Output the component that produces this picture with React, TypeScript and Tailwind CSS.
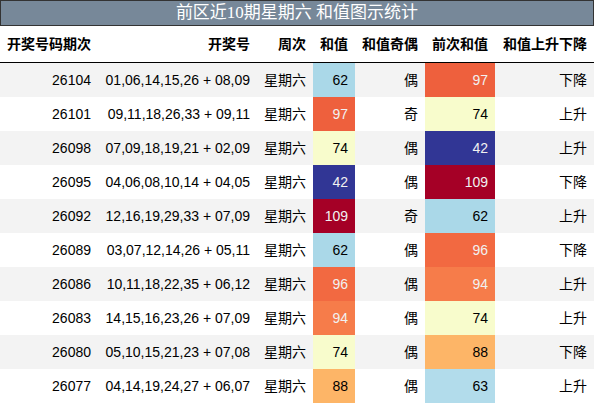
import React from 'react';

const rows = [
  { issue: '26104', nums: '01,06,14,15,26 + 08,09', sum: 62, parity: '偶', prev: 97, trend: '下降' },
  { issue: '26101', nums: '09,11,18,26,33 + 09,11', sum: 97, parity: '奇', prev: 74, trend: '上升' },
  { issue: '26098', nums: '07,09,18,19,21 + 02,09', sum: 74, parity: '偶', prev: 42, trend: '上升' },
  { issue: '26095', nums: '04,06,08,10,14 + 04,05', sum: 42, parity: '偶', prev: 109, trend: '下降' },
  { issue: '26092', nums: '12,16,19,29,33 + 07,09', sum: 109, parity: '奇', prev: 62, trend: '上升' },
  { issue: '26089', nums: '03,07,12,14,26 + 05,11', sum: 62, parity: '偶', prev: 96, trend: '下降' },
  { issue: '26086', nums: '10,11,18,22,35 + 06,12', sum: 96, parity: '偶', prev: 94, trend: '上升' },
  { issue: '26083', nums: '14,15,16,23,26 + 07,09', sum: 94, parity: '偶', prev: 74, trend: '上升' },
  { issue: '26080', nums: '05,10,15,21,23 + 07,08', sum: 74, parity: '偶', prev: 88, trend: '下降' },
  { issue: '26077', nums: '04,14,19,24,27 + 06,07', sum: 88, parity: '偶', prev: 63, trend: '上升' },
];

// RdYlBu_r over 42..109
const heat: Record<number, string> = {
  42: 'bg-[#313695] text-[#f1f1f1]',
  62: 'bg-[#aad8e8] text-black',
  63: 'bg-[#b2dceb] text-black',
  74: 'bg-[#f8fccc] text-black',
  88: 'bg-[#fdb567] text-black',
  94: 'bg-[#f67c4a] text-[#f1f1f1]',
  96: 'bg-[#f26941] text-[#f1f1f1]',
  97: 'bg-[#ee603d] text-[#f1f1f1]',
  109: 'bg-[#a50026] text-[#f1f1f1]',
};

const COLS = 'grid grid-cols-[98px_159px_56px_42px_70px_70px_1fr]';
const cell = 'flex items-center justify-end px-[7px]';

export default function App() {
  return (
    <div
      className="w-[594px] h-[404px] bg-white text-[14px] text-black overflow-hidden"
      style={{ fontFamily: '"Liberation Sans", "Noto Sans CJK SC", sans-serif' }}
    >
      <div
        className="h-[26px] flex items-center justify-center bg-[#778899] border border-[#333] text-white text-[17px]"
        style={{ fontFamily: '"Liberation Serif", "Noto Sans CJK SC", serif' }}
      >
        前区近10期星期六 和值图示统计
      </div>
      <div className={`${COLS} h-[37px] border-b border-black font-bold`}>
        <div className="flex items-center px-[7px]">开奖号码期次</div>
        <div className={cell}>开奖号</div>
        <div className={cell}>周次</div>
        <div className={cell}>和值</div>
        <div className={cell}>和值奇偶</div>
        <div className={cell}>前次和值</div>
        <div className={cell}>和值上升下降</div>
      </div>
      {rows.map((r, i) => (
        <div key={r.issue} className={`${COLS} h-[34px] ${i % 2 === 0 ? 'bg-[#f3f3f3]' : 'bg-white'}`}>
          <div className={cell}>{r.issue}</div>
          <div className={cell}>{r.nums}</div>
          <div className={cell}>星期六</div>
          <div className={`${cell} ${heat[r.sum]}`}>{r.sum}</div>
          <div className={cell}>{r.parity}</div>
          <div className={`${cell} ${heat[r.prev]}`}>{r.prev}</div>
          <div className={cell}>{r.trend}</div>
        </div>
      ))}
    </div>
  );
}
